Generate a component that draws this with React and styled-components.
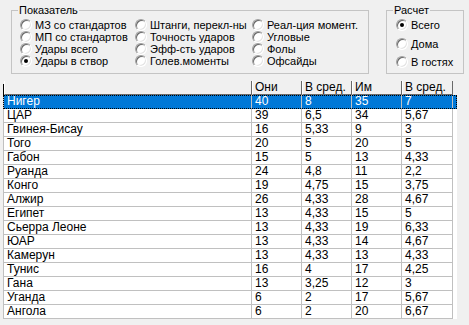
import React from 'react';
import styled, { createGlobalStyle } from 'styled-components';

const GlobalStyle = createGlobalStyle`
	html, body {
		margin: 0;
		padding: 0;
		background: #f0f0f0;
	}
	body {
		font-family: 'Liberation Sans', Arial, sans-serif;
		font-size: 11px;
		color: #000;
	}
`;

const INDICATORS = [
	['МЗ со стандартов', 'МП со стандартов', 'Удары всего', 'Удары в створ'],
	['Штанги, перекл-ны', 'Точность ударов', 'Эфф-сть ударов', 'Голев.моменты'],
	['Реал-ция момент.', 'Угловые', 'Фолы', 'Офсайды'],
];

const MODES = ['Всего', 'Дома', 'В гостях'];

const COLUMNS = ['', 'Они', 'В сред.', 'Им', 'В сред.'];

const ROWS = [
	['Нигер', '40', '8', '35', '7'],
	['ЦАР', '39', '6,5', '34', '5,67'],
	['Гвинея-Бисау', '16', '5,33', '9', '3'],
	['Того', '20', '5', '20', '5'],
	['Габон', '15', '5', '13', '4,33'],
	['Руанда', '24', '4,8', '11', '2,2'],
	['Конго', '19', '4,75', '15', '3,75'],
	['Алжир', '26', '4,33', '28', '4,67'],
	['Египет', '13', '4,33', '15', '5'],
	['Сьерра Леоне', '13', '4,33', '19', '6,33'],
	['ЮАР', '13', '4,33', '14', '4,67'],
	['Камерун', '13', '4,33', '13', '4,33'],
	['Тунис', '16', '4', '17', '4,25'],
	['Гана', '13', '3,25', '12', '3'],
	['Уганда', '6', '2', '17', '5,67'],
	['Ангола', '6', '2', '20', '6,67'],
];

function Radio({ label, checked }) {
	return (
		<RadioRow>
			<RadioCircle $checked={checked} />
			<span>{label}</span>
		</RadioRow>
	);
}

export default function App() {
	return (
		<Window>
			<GlobalStyle />
			<TopPanel>
				<GroupBox $width="358px">
					<Legend>Показатель</Legend>
					<IndicatorGrid>
						{INDICATORS.map((col, ci) => (
							<RadioColumn key={ci}>
								{col.map((label) => (
									<Radio
										key={label}
										label={label}
										checked={label === 'Удары в створ'}
									/>
								))}
							</RadioColumn>
						))}
					</IndicatorGrid>
				</GroupBox>
				<GroupBox $width="78px">
					<Legend>Расчет</Legend>
					<ModeList>
						{MODES.map((m) => (
							<Radio key={m} label={m} checked={m === 'Всего'} />
						))}
					</ModeList>
				</GroupBox>
			</TopPanel>
			<Grid>
				<HeaderRow>
					<Indicator />
					{COLUMNS.map((c, i) => (
						<HeaderCell key={i}>{c}</HeaderCell>
					))}
				</HeaderRow>
				{ROWS.map((row, ri) => (
					<DataRow key={row[0]} $selected={ri === 0}>
						{row.map((v, i) => (
							<Cell key={i} $selected={ri === 0}>
								{v}
							</Cell>
						))}
					</DataRow>
				))}
			</Grid>
		</Window>
	);
}

const Window = styled.div`
	width: 469px;
	height: 325px;
	overflow: hidden;
	background: #f0f0f0;
`;

const TopPanel = styled.div`
	display: flex;
	align-items: flex-start;
	gap: 17px;
	height: 81px;
	box-sizing: border-box;
	padding: 4px 0 0 11px;
`;

const GroupBox = styled.fieldset`
	width: ${(p) => p.$width};
	height: 70px;
	box-sizing: border-box;
	margin: 0;
	padding: 0;
	border: 1px solid #c4c4c4;
	border-radius: 0;
`;

const Legend = styled.legend`
	margin-left: 6px;
	padding: 0 1px;
	line-height: 13px;
`;

const IndicatorGrid = styled.div`
	display: grid;
	grid-template-columns: 115px 117px auto;
	padding: 2px 0 0 8px;
`;

const RadioColumn = styled.div`
	display: flex;
	flex-direction: column;
`;

const ModeList = styled.div`
	display: flex;
	flex-direction: column;
	gap: 6.5px;
	padding: 2px 0 0 9px;
`;

const RadioRow = styled.div`
	display: flex;
	align-items: center;
	gap: 3px;
	height: 12px;
	line-height: 12px;
	white-space: nowrap;
`;

const RadioCircle = styled.span`
	position: relative;
	flex: none;
	width: 12px;
	height: 12px;
	box-sizing: border-box;
	border-radius: 50%;
	border: 1px solid;
	border-color: #a0a0a0 #ffffff #ffffff #a0a0a0;
	box-shadow: inset 1px 1px #696969, inset -1px -1px #e3e3e3;
	background: #fff;

	&::after {
		content: '';
		display: ${(p) => (p.$checked ? 'block' : 'none')};
		position: absolute;
		left: 3px;
		top: 3px;
		width: 4px;
		height: 4px;
		border-radius: 50%;
		background: #000;
	}
`;

const Grid = styled.div`
	width: 454px;
	margin-left: 3px;
	background: #fff;
	font-size: 12px;
`;

const HeaderRow = styled.div`
	display: grid;
	grid-template-columns: 1px 248px 50px 50px 50px 51px;
	height: 14px;
	background: #f0f0f0;
`;

const Indicator = styled.div`
	border-right: 1px solid #000;
	margin-top: 3px;
`;

const HeaderCell = styled.div`
	box-sizing: border-box;
	padding-left: 2px;
	line-height: 13px;
	white-space: nowrap;
	overflow: hidden;
	border-left: 1px solid #fff;
	border-right: 1px solid #696969;
	border-bottom: 1px solid #696969;
	background: #f0f0f0;
`;

const DataRow = styled.div`
	display: grid;
	grid-template-columns: 249px 50px 50px 50px 51px;
	height: 14px;
	box-sizing: border-box;
	background: ${(p) => (p.$selected ? '#0078d7' : '#fff')};
	color: ${(p) => (p.$selected ? '#fff' : '#000')};
	outline: ${(p) => (p.$selected ? '1px dotted #000' : 'none')};
	outline-offset: -1px;
`;

const Cell = styled.div`
	box-sizing: border-box;
	padding-left: 3px;
	line-height: 13px;
	white-space: nowrap;
	overflow: hidden;
	border-right: 1px solid #c0c0c0;
	border-bottom: 1px solid ${(p) => (p.$selected ? '#0078d7' : '#c0c0c0')};

	&:first-child {
		border-left: 1px solid #c0c0c0;
	}
`;
